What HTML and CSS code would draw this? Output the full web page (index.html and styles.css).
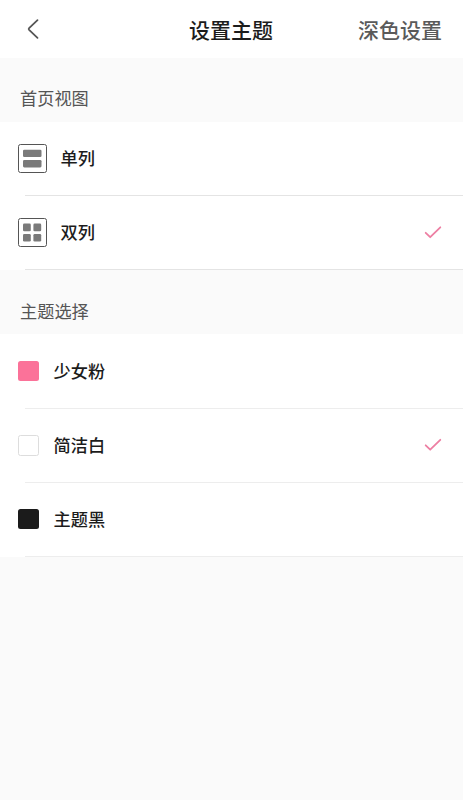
FILE: index.html
```html
<!DOCTYPE html>
<html lang="zh-CN">
<head>
<meta charset="utf-8">
<meta name="viewport" content="width=device-width, initial-scale=1">
<title>设置主题</title>
<link rel="stylesheet" href="styles.css">
</head>
<body>
<header class="header">
  <svg class="back" width="14" height="22" viewBox="0 0 14 22"><path d="M11.5 2.2 3.1 10.2Q2.3 11 3.1 11.8L11.5 19.8"/></svg>
  <h1 class="title">设置主题</h1>
  <span class="action">深色设置</span>
</header>
<main>
  <h2 class="section-title">首页视图</h2>
  <ul class="list">
    <li class="row row-view">
      <svg class="view-icon" width="30" height="30" viewBox="0 0 30 30"><rect class="frame" x="1.5" y="1.5" width="28" height="28" rx="2"/><rect x="6" y="6.7" width="18.5" height="7.4" rx="1.3"/><rect x="6" y="17" width="18.5" height="7.4" rx="1.3"/></svg>
      <span class="label">单列</span>
    </li>
    <li class="row row-view">
      <svg class="view-icon" width="30" height="30" viewBox="0 0 30 30"><rect class="frame" x="1.5" y="1.5" width="28" height="28" rx="2"/><rect x="6" y="6.6" width="7.8" height="7.6" rx="1.3"/><rect x="16.4" y="6.6" width="7.8" height="7.6" rx="1.3"/><rect x="6" y="17" width="7.8" height="7.6" rx="1.3"/><rect x="16.4" y="17" width="7.8" height="7.6" rx="1.3"/></svg>
      <span class="label">双列</span>
      <svg class="check" width="18" height="14" viewBox="0 0 18 14"><path d="M1.7 7.8 6.2 12.2 16.3 2.3"/></svg>
    </li>
  </ul>
  <h2 class="section-title section-theme">主题选择</h2>
  <ul class="list list-theme">
    <li class="row">
      <span class="swatch pink"></span>
      <span class="label">少女粉</span>
    </li>
    <li class="row">
      <span class="swatch white"></span>
      <span class="label">简洁白</span>
      <svg class="check" width="18" height="14" viewBox="0 0 18 14"><path d="M1.7 7.3 6.2 11.7 16.3 1.8"/></svg>
    </li>
    <li class="row">
      <span class="swatch black"></span>
      <span class="label">主题黑</span>
    </li>
  </ul>
</main>
</body>
</html>
```
FILE: styles.css
```css
* {
  box-sizing: border-box;
}

body {
  margin: 0;
  min-height: 100vh;
  background: #fafafa;
  color: #1c1c1c;
  font-family: "Noto Sans CJK SC", sans-serif;
}

.header {
  display: grid;
  grid-template-columns: 1fr auto 1fr;
  align-items: center;
  height: 58px;
  padding: 0 21px 0 26px;
  background: #fff;
}

.back {
  fill: none;
  stroke: #555;
  stroke-width: 1.8;
  stroke-linecap: round;
}

.title {
  margin: 0 3px 0 -3px;
  font-size: 21px;
  line-height: 30px;
  font-weight: 500;
}

.action {
  justify-self: end;
  color: #5a5a5a;
  font-size: 21px;
  line-height: 30px;
  font-weight: 500;
}

.section-title {
  display: flex;
  align-items: center;
  height: 64px;
  margin: 0;
  padding: 16px 20px 0;
  color: #555;
  font-size: 17.2px;
  line-height: 24px;
  font-weight: 400;
}

.section-theme {
  padding-top: 18px;
}

.list {
  margin: 0;
  padding: 0;
  list-style: none;
  background: #fff;
}

.row {
  display: flex;
  align-items: center;
  gap: 15px;
  height: 74px;
  padding: 0 21px 0 18px;
  background: linear-gradient(#e4e4e4, #e4e4e4) 25px 100% / 100% 1px no-repeat;
}

.list-theme {
  padding-top: 1px;
}

.list-theme .row {
  padding-bottom: 2px;
  background-image: linear-gradient(#ededed, #ededed);
}

.row-view {
  gap: 13.5px;
  padding-left: 17px;
  padding-bottom: 2px;
}

.view-icon {
  fill: #7a7a7a;
}

.frame {
  fill: #fff;
  stroke: #555;
  stroke-width: 1;
}

.label {
  font-size: 17.2px;
  line-height: 24px;
  font-weight: 500;
}

.check {
  margin-left: auto;
  fill: none;
  stroke: #ed7fa3;
  stroke-width: 1.8;
  stroke-linecap: round;
  stroke-linejoin: round;
}

.swatch {
  width: 20.5px;
  height: 20px;
  border-radius: 2.5px;
}

.pink {
  background: #fb7299;
}

.white {
  height: 21px;
  border: 1px solid #ddd;
  background: #fff;
}

.black {
  background: #1b1b1b;
}
```
